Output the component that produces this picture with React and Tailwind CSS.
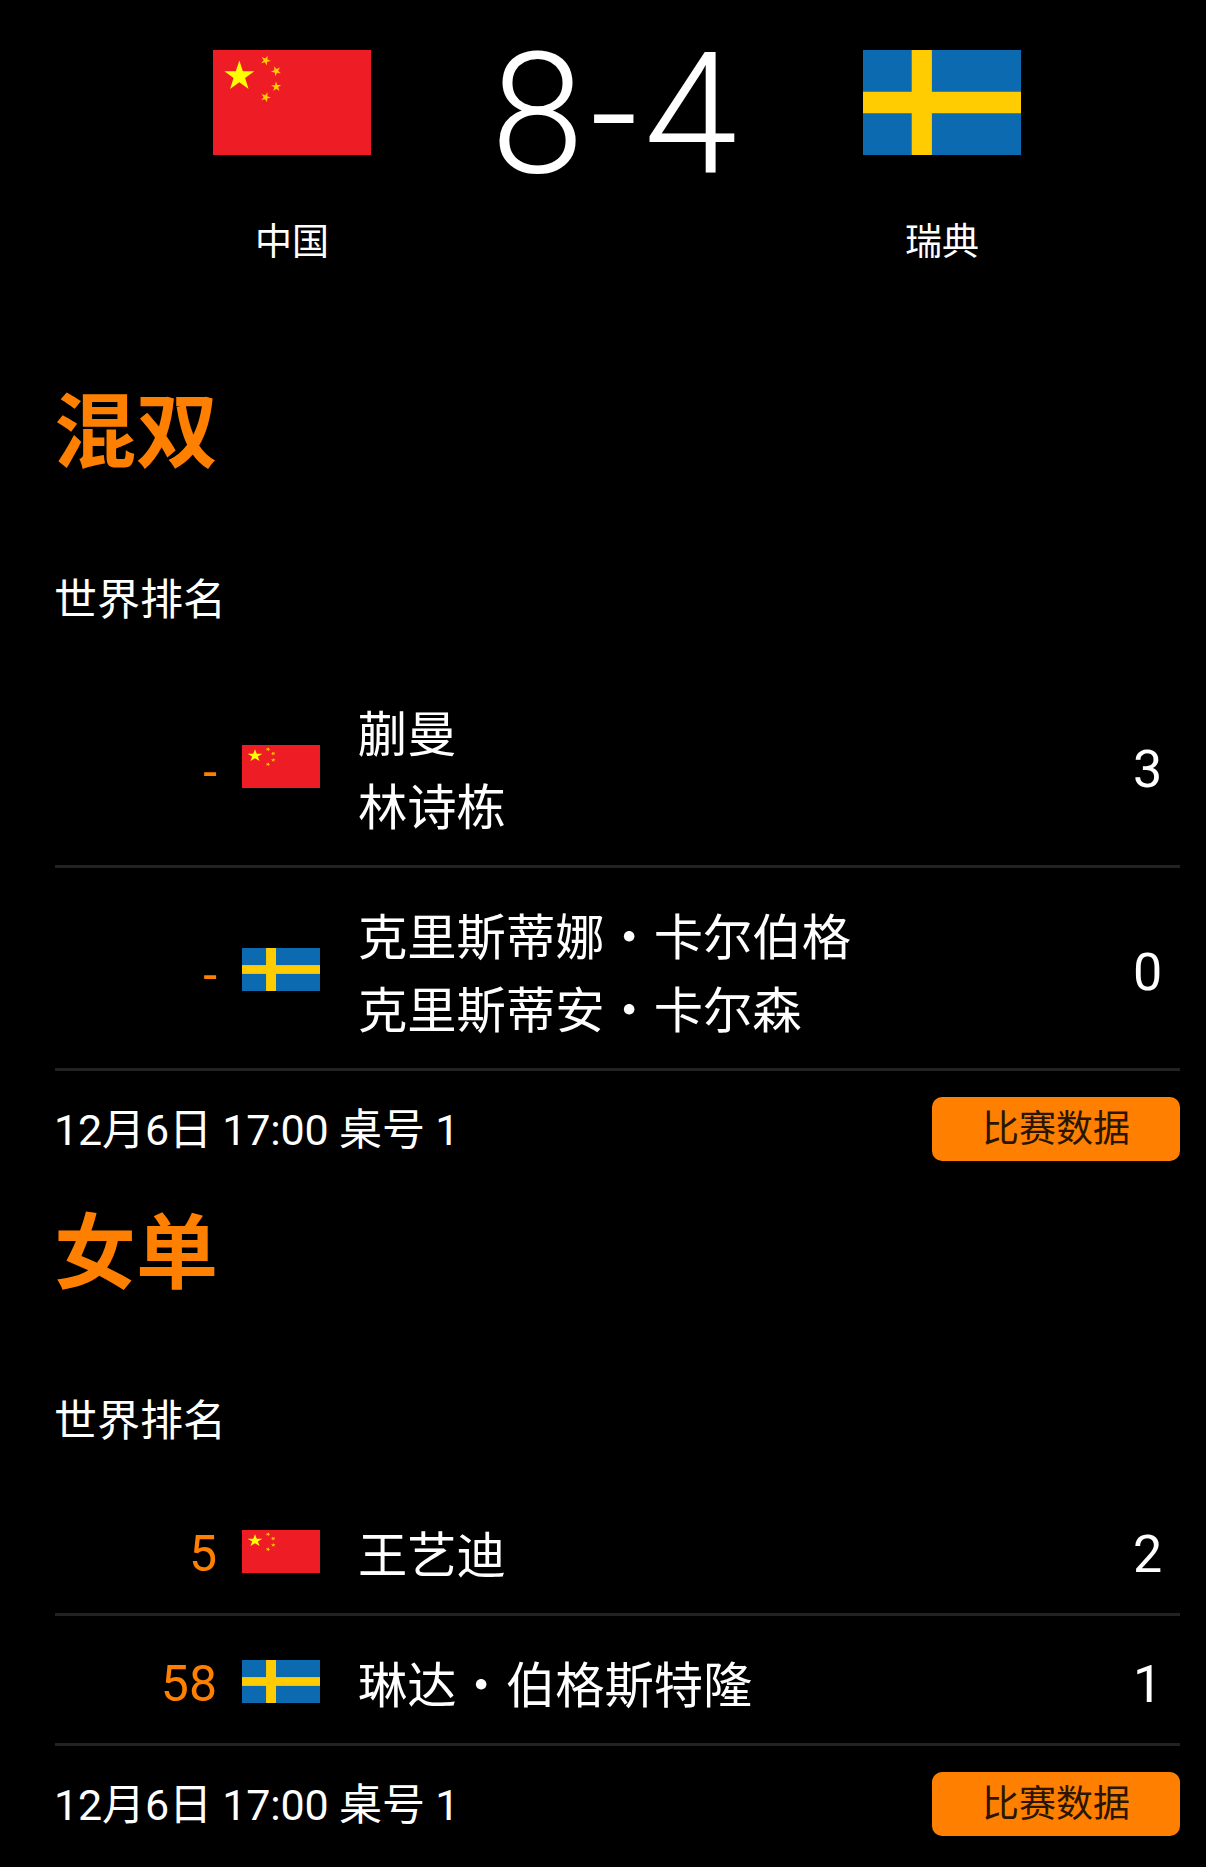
import React from 'react';

const fontStack = { fontFamily: 'Roboto, "Noto Sans CJK SC", sans-serif' };

const starPoints = (cx, cy, r, rot = 0) => {
  const pts = [];
  for (let i = 0; i < 10; i++) {
    const rad = i % 2 === 0 ? r : r * 0.382;
    const a = (-90 + rot + i * 36) * (Math.PI / 180);
    pts.push(`${(cx + rad * Math.cos(a)).toFixed(2)},${(cy + rad * Math.sin(a)).toFixed(2)}`);
  }
  return pts.join(' ');
};

const FlagCN = ({ className }) => (
  <svg viewBox="0 0 30 20" preserveAspectRatio="none" className={className}>
    <rect width="30" height="20" fill="#ee1c25" />
    <polygon points={starPoints(5, 5, 3)} fill="#ffff00" />
    <polygon points={starPoints(10, 2, 1, 23)} fill="#ffcc00" />
    <polygon points={starPoints(12, 4, 1, 46)} fill="#ffcc00" />
    <polygon points={starPoints(12, 7, 1, 70)} fill="#ffcc00" />
    <polygon points={starPoints(10, 9, 1, 21)} fill="#ffcc00" />
  </svg>
);

const FlagSE = ({ className }) => (
  <svg viewBox="0 0 133 88" preserveAspectRatio="none" className={className}>
    <rect width="133" height="88" fill="#0b6ab0" />
    <rect x="41" width="17" height="88" fill="#fecc00" />
    <rect y="35" width="133" height="18" fill="#fecc00" />
  </svg>
);

const flags = { cn: FlagCN, se: FlagSE };

const Row = ({ rank, flag, names, score, tall }) => {
  const Flag = flags[flag];
  return (
    <div className={`flex items-center border-b-[3px] border-[#222222] ${tall ? 'h-[203px]' : 'h-[130px]'}`}>
      <div className={`w-[162px] text-right text-[50px] text-[#ff8000] ${rank === '-' ? 'pt-[14px]' : 'pt-[10px]'}`}>{rank}</div>
      <Flag className="ml-[25px] mt-[3px] w-[78px] h-[43px] shrink-0" />
      <div className="ml-[38px] flex-1 pt-[13px] text-[49.3px] leading-[73px] text-white">
        {names.map((n) => (
          <div key={n}>{n}</div>
        ))}
      </div>
      <div className="w-[37px] mr-[14px] pt-[10px] text-center text-[52px] text-white">{score}</div>
    </div>
  );
};

const Section = ({ title, rows, tall, className }) => (
  <section className={className}>
    <h2 className="-ml-px h-[96px] text-[82px] leading-[96px] font-bold text-[#ff8000]">{title}</h2>
    <div className="-ml-px mt-[88px] h-[60px] text-[43px] leading-[62px] text-white">世界排名</div>
    <div className="mt-[36px]">
      {rows.map((r) => (
        <Row key={r.names[0]} {...r} tall={tall} />
      ))}
    </div>
    <div className="mt-[26px] h-[64px] flex items-center justify-between">
      <span className="-ml-px pt-[2px] text-[43px] tracking-[-0.15px] text-white">12月6日 17:00 桌号 1</span>
      <button className="w-[248px] h-[64px] rounded-[10px] bg-[#ff8000] pt-[2px] text-[37px] text-[#2a1500]">比赛数据</button>
    </div>
  </section>
);

export default function App() {
  return (
    <div className="w-[1206px] h-[1867px] overflow-hidden bg-black" style={fontStack}>
      <header className="relative h-[300px] pt-[50px] flex">
        <div className="ml-[134px] w-[316px] flex flex-col items-center">
          <FlagCN className="w-[158px] h-[105px]" />
          <div className="mt-[63px] text-[37px] leading-[50px] text-white">中国</div>
        </div>
        <div className="w-[334px] h-[125px] mt-[2px] flex items-center justify-center text-[168px] leading-[125px] tracking-[6px] font-[360] text-white">
          8-4
        </div>
        <div className="w-[316px] flex flex-col items-center">
          <FlagSE className="w-[158px] h-[105px]" />
          <div className="mt-[63px] text-[37px] leading-[50px] text-white">瑞典</div>
        </div>
      </header>
      <div className="pl-[55px] pr-[26px]">
        <Section
          title="混双"
          tall
          className="mt-[85px]"
          rows={[
            { rank: '-', flag: 'cn', names: ['蒯曼', '林诗栋'], score: '3' },
            { rank: '-', flag: 'se', names: ['克里斯蒂娜・卡尔伯格', '克里斯蒂安・卡尔森'], score: '0' },
          ]}
        />
        <Section
          title="女单"
          className="mt-[45px]"
          rows={[
            { rank: '5', flag: 'cn', names: ['王艺迪'], score: '2' },
            { rank: '58', flag: 'se', names: ['琳达・伯格斯特隆'], score: '1' },
          ]}
        />
      </div>
    </div>
  );
}
